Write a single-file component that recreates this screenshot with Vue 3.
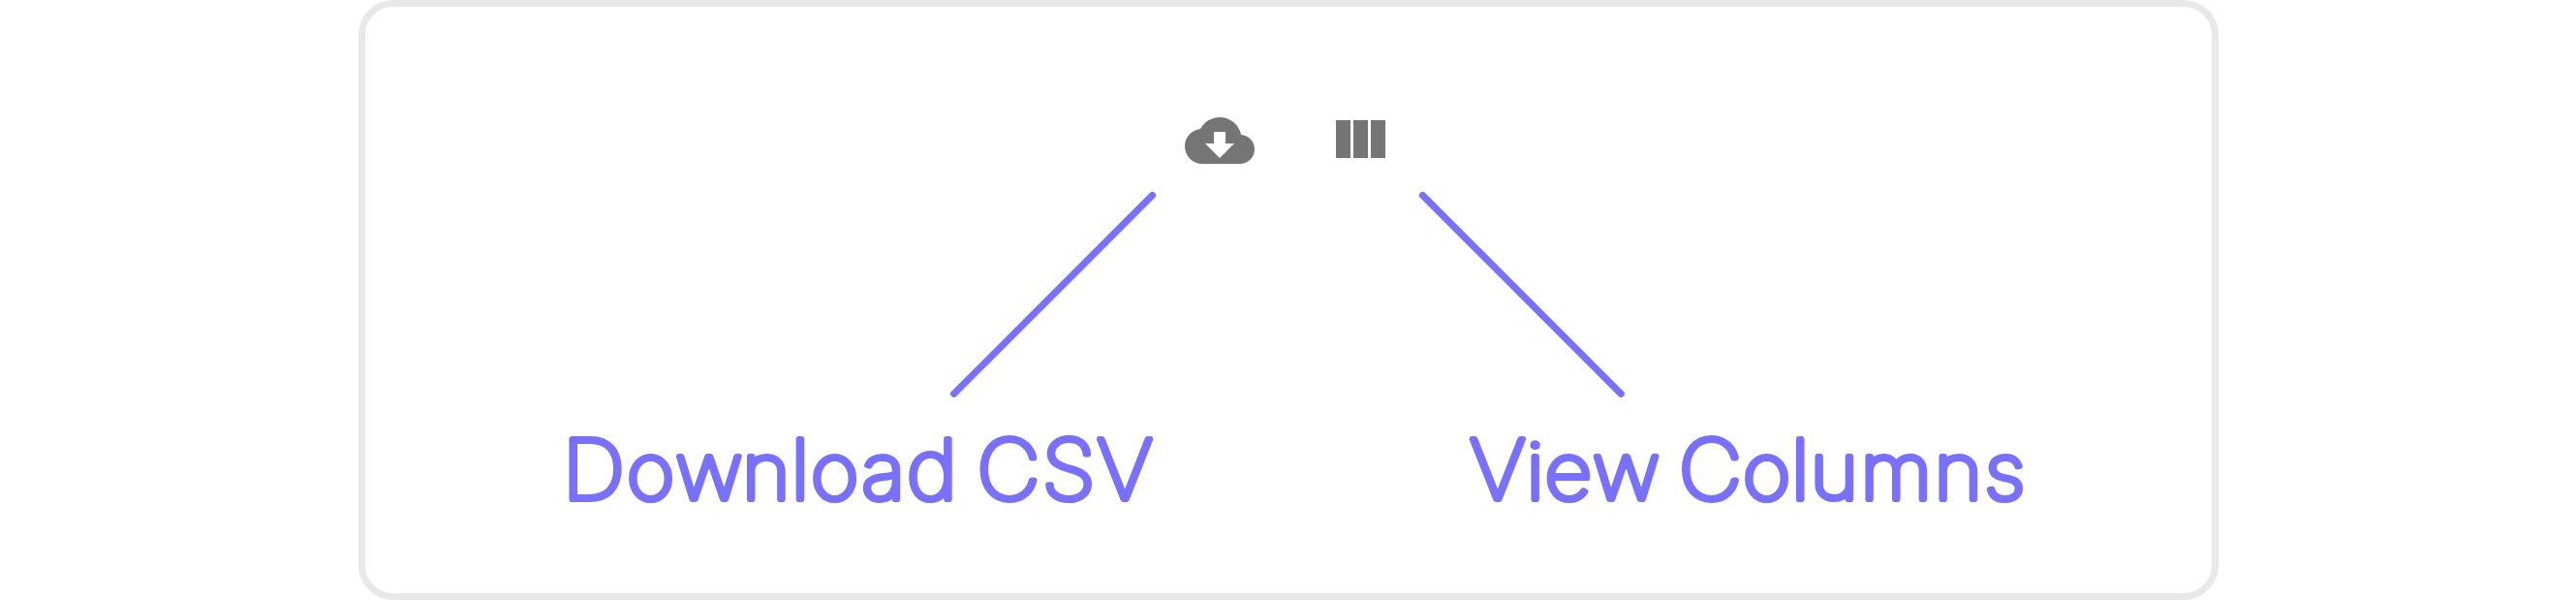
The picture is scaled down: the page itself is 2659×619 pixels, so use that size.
<script setup>
const STRETCH = 1.055
const CAP_SIZE = 85.5
const LOW_SIZE = 80.5

// Horizontal middle of each glyph's ink, in em
const mid = {
  D: 0.3825, C: 0.3595, S: 0.305, V: 0.32, l: 0.1095, d: 0.2735, i: 0.1095,
  o: 0.2895, w: 0.3985, n: 0.297, a: 0.2425, e: 0.2895, u: 0.297, m: 0.4375, s: 0.2505, ' ': 0.13,
}

// Turns the wanted glyph centres (px from the label's left edge) into text positions
function layout(text, centres) {
  return [...text].map((ch, i) => {
    const size = 'owaneumsi'.includes(ch) ? LOW_SIZE : CAP_SIZE
    return { ch, low: size === LOW_SIZE, x: (centres[i] / STRETCH - mid[ch] * size).toFixed(2) }
  })
}

const labels = [
  {
    text: 'Download CSV',
    width: 620,
    glyphs: layout('Download CSV', [35, 91.7, 151.4, 211.3, 246.2, 281.5, 330.2, 380.5, 417, 460.7, 523, 581.2]),
  },
  {
    text: 'View Columns',
    width: 600,
    glyphs: layout('View Columns', [35.8, 74.8, 109, 168, 213, 255.1, 313.5, 348.5, 383.7, 447.7, 511.8, 559.8]),
  },
]
</script>

<template>
  <main class="page">
    <section class="card">
      <div class="icons">
        <svg class="icon" viewBox="0 0 24 24">
          <path d="M19.35 10.04C18.67 6.59 15.64 4 12 4 9.11 4 6.6 5.64 5.35 8.04 2.34 8.36 0 10.91 0 14c0 3.31 2.69 6 6 6h13c2.76 0 5-2.24 5-5 0-2.64-2.05-4.78-4.65-4.96zM17 13l-5 5-5-5h3V9h4v4h3z" />
        </svg>
        <svg class="icon" viewBox="0 0 24 24">
          <path d="M10 18h5V5h-5v13zm-6 0h5V5H4v13zM16 5v13h5V5h-5z" />
        </svg>
      </div>
      <div class="connectors">
        <svg class="connector" viewBox="0 0 212 212"><path d="M208.5 3.5L3.7 208.3" /></svg>
        <svg class="connector" viewBox="0 0 212 212"><path d="M3.5 3.5L208.2 208.3" /></svg>
      </div>
      <div class="labels">
        <svg v-for="l in labels" :key="l.text" class="label" :width="l.width" height="110">
          <text y="85.2" :transform="`scale(${STRETCH} 1)`"><tspan v-for="(g, i) in l.glyphs" :key="i" :x="g.x" :class="{ low: g.low }">{{ g.ch }}</tspan></text>
        </svg>
      </div>
    </section>
  </main>
</template>

<style>
body {
  background: #fff;
}
</style>

<style scoped>
.page {
  display: flex;
  justify-content: center;
  height: 619px;
  overflow: hidden;
}
.card {
  box-sizing: border-box;
  width: 1920px;
  height: 619px;
  border: 7px solid #e8e8e8;
  border-radius: 36px;
  background: #fff;
}
svg {
  display: block;
  flex: none;
  overflow: visible;
}
.icons {
  display: flex;
  gap: 72px;
  margin: 101.5px 0 0 846.5px;
}
.icon {
  width: 72px;
  height: 72px;
  fill: #757575;
}
.connectors {
  display: flex;
  gap: 272px;
  margin: 17.5px 0 0 604.5px;
}
.connector {
  width: 212px;
  height: 212px;
  fill: none;
  stroke: #7870ff;
  stroke-width: 7.2;
  stroke-linecap: round;
}
.labels {
  display: flex;
  gap: 310px;
  margin: 20px 0 0 203.5px;
}
.label {
  font-family: Inter, "Liberation Sans", sans-serif;
  font-size: 85.5px;
  font-weight: 100;
  fill: #7870ff;
  stroke: #7870ff;
  stroke-width: 6.2;
  stroke-linejoin: round;
}
.low {
  font-size: 80.5px;
}
</style>
